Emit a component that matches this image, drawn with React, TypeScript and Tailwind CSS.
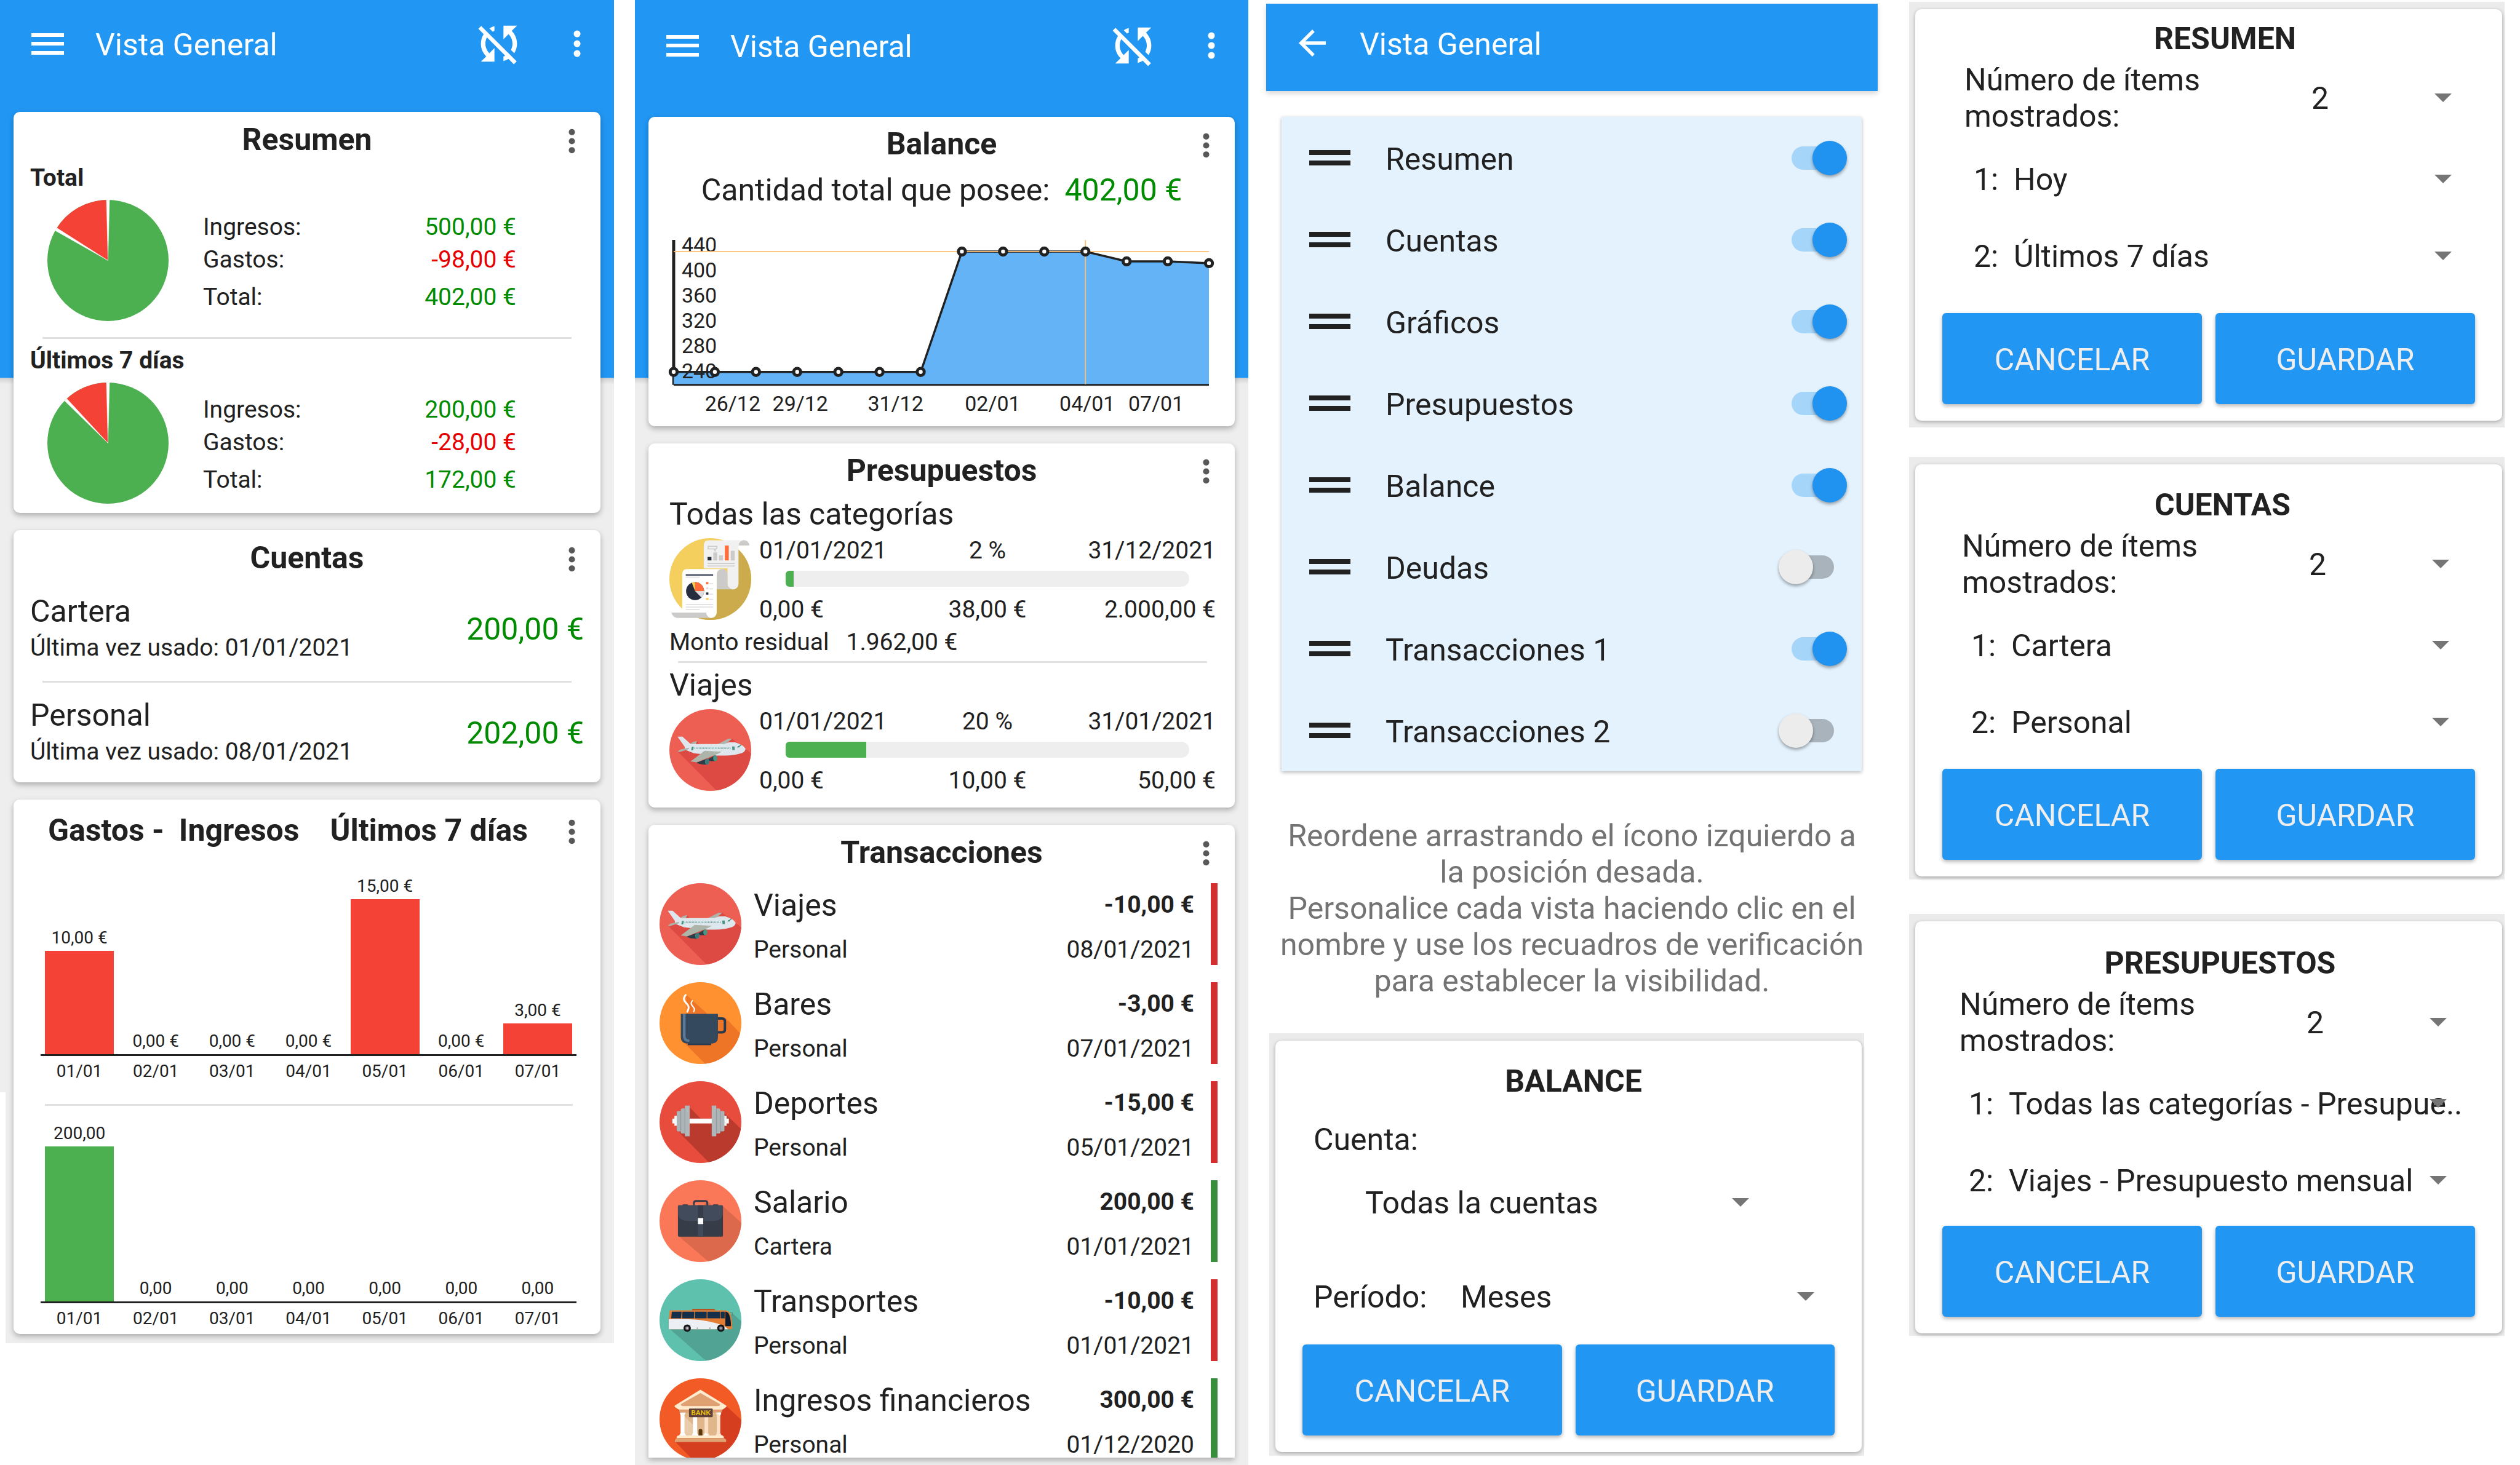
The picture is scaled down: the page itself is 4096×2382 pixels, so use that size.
import React from "react";

/* ---------- small shared icons ---------- */

function Dots({ className }: { className: string }) {
  return (
    <svg viewBox="0 0 12 44" className={className} fill="currentColor" aria-hidden="true">
      <circle cx="6" cy="6" r="5.5" />
      <circle cx="6" cy="22" r="5.5" />
      <circle cx="6" cy="38" r="5.5" />
    </svg>
  );
}

function MenuIcon() {
  return (
    <svg viewBox="0 0 53 35" className="h-[35px] w-[53px]" fill="currentColor" aria-hidden="true">
      <rect width="53" height="6" />
      <rect y="14" width="53" height="6" />
      <rect y="29" width="53" height="6" />
    </svg>
  );
}

function SyncDisabledIcon() {
  return (
    <svg viewBox="0 0 24 24" className="size-[88px]" fill="currentColor" aria-hidden="true">
      <path d="M10 6.35V4.26c-.8.21-1.55.54-2.23.96l1.46 1.46c.25-.12.5-.24.77-.33zm-7.14-.94l2.36 2.36C4.45 8.99 4 10.44 4 12c0 2.21.91 4.2 2.36 5.64L4 20h6v-6l-2.24 2.24C6.68 15.15 6 13.66 6 12c0-1 .25-1.94.68-2.77l8.08 8.08c-.25.13-.5.25-.77.34v2.09c.8-.21 1.55-.54 2.23-.96l2.36 2.36 1.27-1.27L4.14 4.14 2.86 5.41zM20 4h-6v6l2.24-2.24C17.32 8.85 18 10.34 18 12c0 1-.25 1.94-.68 2.77l1.46 1.46C19.55 15.01 20 13.56 20 12c0-2.21-.91-4.2-2.36-5.64L20 4z" />
    </svg>
  );
}

/* ---------- category icons ---------- */

function Disc({ id, color, shadow, shape, children }: { id: string; color: string; shadow: string; shape: string; children: React.ReactNode }) {
  return (
    <svg viewBox="0 0 100 100" className="size-[133px] shrink-0" aria-hidden="true">
      <defs>
        <clipPath id={id}>
          <circle cx="50" cy="50" r="50" />
        </clipPath>
      </defs>
      <circle cx="50" cy="50" r="50" fill={color} />
      <path d={shape} fill={shadow} clipPath={`url(#${id})`} />
      {children}
    </svg>
  );
}

function PlaneIcon({ id }: { id: string }) {
  return (
    <Disc id={id} color="#ee5f53" shadow="#dd4a43" shape="M10 51.5L58 100H100V54L76.5 36L66 46L37 43L34 39L28 48Z">
      <path d="M25 42.5L29 40L34 39L32 42.8ZM58.5 43L71.8 36.2L76.5 36L68.5 43Z" fill="#adb5ab" />
      <path d="M10 33.6H16L26 42.6H67L72.6 40.6H80.5Q91 44 93 48.3Q93 51.5 89 53.6Q80 56.8 68 56.8H56L30 54L18.6 49.4L19 46.5Z" fill="#dfe7ee" />
      <path d="M10 52L13.4 49.4L24 47.2L23.5 49L12.5 52.5Z" fill="#adb5ab" />
      <path d="M44 63L56 56.3L56.5 63.6L50 63.6Z" fill="#2a3f49" />
      <path d="M33 65.5L46 60.8V67.8Q37 68 33 65.5Z" fill="#2a3f49" />
      <path d="M26 64L43 51L64 52L59.6 54.5L33.4 65Z" fill="#adb5ab" />
      <ellipse cx="56" cy="60" rx="2.5" ry="3.7" fill="#4c9583" />
      <ellipse cx="46.2" cy="64.3" rx="2.3" ry="3.4" fill="#3a7c74" stroke="#5b7f93" strokeWidth="0.7" />
      <path d="M30.6 47.7H75" stroke="#4c9583" strokeWidth="1.3" strokeDasharray="0.9 0.9" />
      <path d="M27.4 46H29.8L29 50.4H26.6ZM76.6 45.6H79.6L80 50H77ZM82.8 47L84 45.2L86.6 44.6L86 46.6ZM85.6 44.6L86.8 43.2L88 43.6L87.4 45.2Z" fill="#4c9583" />
    </Disc>
  );
}

function ReportIcon({ id }: { id: string }) {
  return (
    <Disc id={id} color="#f5cf5d" shadow="#ccab4c" shape="M84 13.6L100 29V100H35V96L57 62L84 56Z">
      <path d="M84.5 9A6.6 6.6 0 0 1 97.7 9Z" fill="#cccbc9" />
      <path d="M42 44V9Q42 2.6 48 2.6H91Q84.5 3 84.5 9V56A6.6 6.6 0 0 1 71 56V37H42Z" fill="#f1f1f1" />
      <path d="M57.8 62.5V44A6.6 6.6 0 0 1 71 44V56Q71.5 62 78 62.5Z" fill="#cccbc9" />
      <path d="M47.3 10H58V13.2H47.3ZM54.5 13.5L56 15.5V13.5Z" fill="none" stroke="#cccbc9" strokeWidth="1.2" />
      <path d="M53.7 17.5H58.5V27.2H53.7ZM60.6 21H65.5V27.2H60.6ZM75 15.5H79.8V27.2H75ZM46.7 30.3H79.8V31.5H46.7ZM46.7 33.4H79.8V34.6H46.7Z" fill="#cccbc9" />
      <rect x="46.7" y="23" width="4.7" height="4.2" fill="#262d3d" />
      <rect x="67.8" y="9" width="4.8" height="18.2" fill="#ff6d3a" />
      <path d="M2.4 91H46L52 97.5H9Q4 96.5 2.4 91Z" fill="#cccbc9" />
      <path d="M15.7 44Q15.7 37.7 22 37.7H65Q57.8 37.7 57.8 45V91A6.5 6.5 0 0 1 51.5 97.5A6.5 6.5 0 0 1 45 91H15.7Z" fill="#fff" />
      <rect x="20" y="44.1" width="33.5" height="1.8" fill="#434c5e" />
      <path d="M20 47.2H37V48.4H20ZM20 80.7H53.5V81.9H20ZM20 83.6H53.5V84.8H20ZM20 86.6H37V87.8H20ZM49 55H53.5V56.2H49ZM49 61.4H53.5V62.6H49ZM49 67.8H53.5V69H49ZM49 74.2H53.5V75.4H49Z" fill="#dedede" />
      <circle cx="31.4" cy="64.7" r="11" fill="#262d3d" />
      <path d="M31.4 64.7V53.7A11 11 0 0 1 42.4 64.7Z" fill="#ff6d3a" />
      <path d="M31.4 64.7H42.4A11 11 0 0 1 39.2 72.5Z" fill="#dedede" />
      <path d="M31.4 64.7L27.4 54.4A11 11 0 0 1 31.4 53.7Z" fill="#fdd04f" />
      <rect x="44.8" y="53.7" width="2.9" height="2.6" fill="#ff6d3a" />
      <rect x="44.8" y="60" width="2.9" height="2.6" fill="#dedede" />
      <rect x="44.8" y="66.4" width="2.9" height="2.6" fill="#262d3d" />
      <rect x="44.8" y="73" width="2.9" height="2.6" fill="#fdd04f" />
    </Disc>
  );
}

function CupIcon({ id }: { id: string }) {
  return (
    <Disc id={id} color="#ff9131" shadow="#ee7526" shape="M32.4 15L58.5 38.7L81 44L100 64V100H56L28 72L33 36Z">
      <path d="M32 15.6C28 20 30 23 33 26C36 29 36.5 31 34 36" fill="none" stroke="#fff" strokeWidth="2.2" strokeLinecap="round" />
      <path d="M40 22.6C37.5 26 39 27.5 41 30C43.2 32.5 43 33.5 41.8 36" fill="none" stroke="#fff" strokeWidth="1.6" strokeLinecap="round" />
      <path d="M71 44.3H76.5Q79.9 44.3 79.9 48V57.5Q79.9 61.2 76.5 61.2H71" fill="none" stroke="#273a4d" strokeWidth="3" />
      <rect x="34.5" y="74" width="28.5" height="3" fill="#273a4d" />
      <path d="M26 38.7H71.4V67Q71.4 75 63.5 75H34.5Q26 75 26 67Z" fill="#34495e" />
      <path d="M28.6 39H31.8V66Q32 70 36 70.2Q37.5 71.5 36 73Q29 73 28.6 66Z" fill="#5b7a99" />
    </Disc>
  );
}

function DumbbellIcon({ id }: { id: string }) {
  return (
    <Disc id={id} color="#e74c3c" shadow="#ba3a2e" shape="M36.8 32L50 45.5L64 46L79.5 39.5L100 58.5V100H61L24 62.5L36 50Z">
      <rect x="15.7" y="45.7" width="69" height="5.9" fill="#fff" />
      <path d="M18.2 42.3H22V54.5H18.2ZM78.5 42.3H82V54.5H78.5Z" fill="#f3f5f7" />
      <rect x="21" y="36.4" width="6" height="24.8" rx="1.5" fill="#adb4b8" />
      <rect x="73.5" y="36.4" width="5.8" height="24.8" rx="1.5" fill="#adb4b8" />
      <rect x="26" y="33.2" width="6" height="30.8" rx="1.5" fill="#adb4b8" />
      <rect x="68.5" y="33.2" width="5.7" height="30.8" rx="1.5" fill="#adb4b8" />
      <rect x="31" y="29.8" width="5.8" height="37.5" fill="#b0b7ba" />
      <rect x="63.8" y="29.8" width="5.5" height="37.5" fill="#b0b7ba" />
      <path d="M26 37V60.5M31 34V63M69.4 34V63M74.2 37V60.5" stroke="#8d9498" strokeWidth="0.8" />
    </Disc>
  );
}

function BriefcaseIcon({ id }: { id: string }) {
  return (
    <Disc id={id} color="#fa7858" shadow="#dc694c" shape="M58.5 25.5L64.5 31L77.5 31.8L100 52V100H60.5L23.5 68.5L44 40Z">
      <path d="M42 31V28Q42 25.4 44.6 25.4H56Q58.4 25.4 58.4 28V31" fill="none" stroke="#363c48" strokeWidth="2.2" />
      <rect x="28.2" y="29.5" width="6.6" height="2" rx="0.8" fill="#363c48" />
      <rect x="65.2" y="29.5" width="6.6" height="2" rx="0.8" fill="#363c48" />
      <rect x="22.5" y="30.6" width="55" height="38.4" rx="1.5" fill="#363c48" />
      <path d="M24 30.6H76Q77.5 30.6 77.5 32V39Q77.5 49.8 66 49.8H34Q22.5 49.8 22.5 39V32Q22.5 30.6 24 30.6Z" fill="#414b5b" />
      <rect x="46.9" y="30.6" width="6.5" height="17" fill="#363c48" />
      <rect x="46.9" y="52" width="6.5" height="17" fill="#414b5b" />
      <rect x="46.9" y="46.2" width="6.5" height="7.4" fill="#fff" />
    </Disc>
  );
}

function BusIcon({ id }: { id: string }) {
  return (
    <Disc id={id} color="#5ec1ae" shadow="#51a493" shape="M12.4 60.5L57 100H100V51.5L89 41.5L80 50Z">
      <path d="M39.5 38.2Q39.5 36 41 36H66.5Q68 36 68 38.2Z" fill="#b25423" />
      <path d="M12.5 37.9H80Q85 38.2 87 43.5Q88.8 49 88.8 57L88.5 61H12Q11.2 61 11.2 59V49Z" fill="#e37d34" />
      <path d="M11.3 48.6Q50 47.5 70 54Q80 57 84 61H12Q11.2 61 11.2 59Z" fill="#eceff3" />
      <path d="M15 39.6H27L26.3 47.8H14.3ZM28 39.6H42.3L42 47.8H27.5ZM43.2 39.6H57.6V47.8H43ZM58.5 39.6H73.7V47.8H58.5ZM74.6 39.6H79.6V47.8H74.6Z" fill="#12304c" />
      <path d="M80.4 39.6Q84 39.6 85.4 44Q87.3 49 87.3 57.4H80.4Z" fill="#0d1e30" />
      <path d="M86 41H89V44.5" fill="none" stroke="#6b7a60" strokeWidth="0.7" />
      <path d="M45.5 59.2H47V60.2H45.5ZM60.8 59.2H62.3V60.2H60.8Z" fill="#555" />
      <circle cx="33.8" cy="59.8" r="4.5" fill="#141414" />
      <circle cx="33.8" cy="59.8" r="2.3" fill="#7d7482" />
      <circle cx="33.8" cy="59.8" r="1" fill="#ddd" />
      <circle cx="75" cy="59.8" r="4.5" fill="#141414" />
      <circle cx="75" cy="59.8" r="2.3" fill="#6a6c82" />
      <circle cx="75" cy="59.8" r="1" fill="#bbb" />
    </Disc>
  );
}

function BankIcon({ id }: { id: string }) {
  return (
    <Disc id={id} color="#f25b26" shadow="#d53f20" shape="M81.7 34L100 51V100H41L19 77.5L40 60L22 38Z">
      <rect x="27" y="41" width="47" height="30" fill="#e0b68b" />
      <path d="M30 46L41 57V71H30Z" fill="#e8cba8" />
      <path d="M24 38.7H76.5V40.5L75 42H25.5L24 40.5Z" fill="#dfa072" />
      <path d="M24.5 42H32L30.5 45V67L32.5 70H24L25.7 67V45ZM40.8 42H46V67L47.5 70H39.5L40.8 67Z" fill="#fff" />
      <path d="M55 42H59.5V67L61 70H53.5L55 67ZM68.5 42H75.5L74.2 45V67L76 70H68.5L70 67V45Z" fill="#fce0c8" />
      <path d="M53.5 70L56 66.5L60 70ZM70 42H75.5L74.2 46Z" fill="#fff" />
      <path d="M47.7 70V64Q47.7 61.8 50 61.8Q52.4 61.8 52.4 64V70Z" fill="#5c3a10" />
      <path d="M18.5 33.5L50 14L81.7 33.5V35L77 38.3H23.5L18.5 35Z" fill="#ffeccf" />
      <path d="M26 31.5L50 18L74 31.5Q74 34 71 34H29Q26 34 26 31.5Z" fill="#dfa072" />
      <path d="M21 71.5L22.5 70H77L78.6 71.5V73.2H21Z" fill="#ffeccf" />
      <path d="M18.8 75L21 73.2H79L81.4 75V78H18.8Z" fill="#dfa072" />
      <rect x="36" y="37" width="29" height="10.5" rx="1" fill="#5d4037" />
      <text x="50.5" y="45.2" textAnchor="middle" fontFamily="Lato, sans-serif" fontWeight="700" fontSize="8.5" fill="#f3c40e">
        BANK
      </text>
    </Disc>
  );
}

/* ---------- shared building blocks ---------- */

function AppBar({ className }: { className: string }) {
  return (
    <header className={`flex items-center pl-[51px] pr-[54px] text-white ${className}`}>
      <button type="button" aria-label="Menú">
        <MenuIcon />
      </button>
      <h1 className="ml-[51px] pt-1 text-[50px]/[58px]">Vista General</h1>
      <button type="button" aria-label="Sincronización desactivada" className="ml-auto">
        <SyncDisabledIcon />
      </button>
      <button type="button" aria-label="Más opciones" className="ml-[77px]">
        <Dots className="h-[44px] w-[12px]" />
      </button>
    </header>
  );
}

function Card({ className, children }: { className: string; children: React.ReactNode }) {
  return <section className={`mx-[22px] rounded-[10px] bg-white shadow-[0_4px_10px_rgba(0,0,0,0.28)] ${className}`}>{children}</section>;
}

function CardMenu({ label }: { label: string }) {
  return (
    <button type="button" aria-label={`Opciones de ${label}`} className="mr-[41px] justify-self-end pt-1 text-[#585858]">
      <Dots className="h-[41px] w-[11px]" />
    </button>
  );
}

function CardHeader({ title }: { title: string }) {
  return (
    <div className="grid grid-cols-[1fr_auto_1fr] items-center">
      <h2 className="col-start-2 text-[50px]/[58px] font-bold">{title}</h2>
      <CardMenu label={title} />
    </div>
  );
}

function Rule({ className }: { className: string }) {
  return <hr className={`h-[3px] border-0 bg-[#e0e0e0] ${className}`} />;
}

/* ---------- first screen ---------- */

function Pie({ share }: { share: number }) {
  const a = share * 2 * Math.PI;
  const x = 98.5 - 98.5 * Math.sin(a);
  const y = 98.5 - 98.5 * Math.cos(a);
  const dx = 2.5 * Math.cos(a);
  const dy = 2.5 * Math.sin(a);
  return (
    <svg viewBox="0 0 197 197" className="size-[197px] shrink-0" aria-hidden="true">
      <circle cx="98.5" cy="98.5" r="98.5" fill="#4caf50" />
      <path d={`M98.5 98.5L${x} ${y}A98.5 98.5 0 0 1 98.5 0Z`} fill="#f44336" />
      <path d={`M98.5 98.5L${x - dx} ${y + dy}L${x + dx} ${y - dy}ZM98.5 98.5L96 -1H101Z`} fill="#fff" stroke="#fff" strokeWidth="0.5" />
    </svg>
  );
}

function Summary({ title, income, expense, total, share }: { title: string; income: string; expense: string; total: string; share: number }) {
  return (
    <div>
      <h3 className="text-[39px]/[46px] font-bold">{title}</h3>
      <div className="mt-[13px] flex pl-[28px] pr-[110px]">
        <Pie share={share} />
        <dl className="ml-[56px] grid flex-1 grid-cols-[1fr_auto] content-start gap-y-[7px] pt-[21px] text-right text-[39px]/[46px]">
          <dt className="text-left">Ingresos:</dt>
          <dd className="text-[#008b00]">{income}</dd>
          <dt className="text-left">Gastos:</dt>
          <dd className="text-[#e60000]">{expense}</dd>
          <dt className="pt-2 text-left">Total:</dt>
          <dd className="pt-2 text-[#008b00]">{total}</dd>
        </dl>
      </div>
    </div>
  );
}

function Account({ name, used, amount }: { name: string; used: string; amount: string }) {
  return (
    <div className="flex items-center justify-between">
      <div>
        <h3 className="text-[50px]/[58px]">{name}</h3>
        <p className="mt-[7px] text-[39px]/[46px]">Última vez usado: {used}</p>
      </div>
      <p className="pt-1 text-[50px]/[58px] text-[#008b00]">{amount}</p>
    </div>
  );
}

const days = ["01/01", "02/01", "03/01", "04/01", "05/01", "06/01", "07/01"];

function BarChart({ values, labels, max, bar }: { values: number[]; labels: string[]; max: number; bar: string }) {
  return (
    <div className="ml-[17px] mr-[12px] text-center text-[28px]/[34px]">
      <div className="grid h-[290px] grid-cols-7 items-end gap-x-3 px-[7px]">
        {values.map((v, i) => (
          <div key={i}>
            <span className="block whitespace-nowrap pb-1">{labels[i]}</span>
            <div className={bar} style={{ height: `${(v / max) * 252}px` }} />
          </div>
        ))}
      </div>
      <div className="grid grid-cols-7 gap-x-3 border-t-3 border-[#212121] px-[7px] pt-2">
        {days.map((d) => (
          <span key={d}>{d}</span>
        ))}
      </div>
    </div>
  );
}

function ScreenOne() {
  return (
    <div className="relative mr-[34px] self-start bg-[linear-gradient(to_bottom,#2196f3_0px,#2196f3_614px,#d2d2d2_615px,#eeeeee_625px)] pb-[15px]">
      <div className="absolute bottom-0 left-0 h-[408px] w-[9px] bg-white" />
      <AppBar className="h-[142px]" />
      <main className="flex flex-col gap-[28px] pt-[40px]">
        <Card className="pb-[15px] pt-[16px]">
          <CardHeader title="Resumen" />
          <div className="px-[27px] pt-[10px]">
            <Summary title="Total" income="500,00 €" expense="-98,00 €" total="402,00 €" share={98 / 598} />
            <Rule className="mx-[20px] mb-[12px] mt-[26px]" />
            <Summary title="Últimos 7 días" income="200,00 €" expense="-28,00 €" total="172,00 €" share={28 / 228} />
          </div>
        </Card>
        <Card className="pb-[27px] pt-[16px]">
          <CardHeader title="Cuentas" />
          <div className="px-[27px] pt-[29px]">
            <Account name="Cartera" used="01/01/2021" amount="200,00 €" />
            <Rule className="mx-[20px] mb-[24px] mt-[31px]" />
            <Account name="Personal" used="08/01/2021" amount="202,00 €" />
          </div>
        </Card>
        <Card className="pb-[8px] pt-[21px]">
          <div className="flex items-center pl-[56px] text-[50px]/[58px] font-bold">
            <h2>Gastos -</h2>
            <h2 className="ml-[24px]">Ingresos</h2>
            <h2 className="ml-[50px] mr-auto">Últimos 7 días</h2>
            <CardMenu label="gráficos" />
          </div>
          <div className="px-[27px] pt-[45px]">
            <BarChart
              values={[10, 0, 0, 0, 15, 0, 3]}
              labels={["10,00 €", "0,00 €", "0,00 €", "0,00 €", "15,00 €", "0,00 €", "3,00 €"]}
              max={15}
              bar="bg-[#f44336]"
            />
            <Rule className="mb-[28px] ml-[24px] mr-[18px] mt-[36px]" />
            <BarChart values={[200, 0, 0, 0, 0, 0, 0]} labels={["200,00", "0,00", "0,00", "0,00", "0,00", "0,00", "0,00"]} max={200} bar="bg-[#4caf50]" />
          </div>
        </Card>
      </main>
    </div>
  );
}

/* ---------- second screen ---------- */

const series = [225, 225, 225, 225, 225, 225, 225, 29, 29, 29, 29, 45, 45, 48].map((y, i) => [41 + 67 * i, y]);

function BalanceChart() {
  const line = series.map((p) => p.join(",")).join(" ");
  return (
    <svg viewBox="0 -20 954 320" className="w-full" role="img" aria-label="Evolución del balance" fontFamily="Roboto, sans-serif" fontSize="34" fill="#212121">
      <polygon points={`41,246 ${line} 912,246`} fill="#64b3f6" />
      <path d="M41 10V225" stroke="#212121" strokeWidth="5" />
      <path d="M40 220V246" stroke="#212121" strokeWidth="2.5" />
      <path d="M41 246H912" stroke="#212121" strokeWidth="3" />
      {[440, 400, 360, 320, 280, 240].map((v, i) => (
        <text key={v} x="54" y={30 + i * 41}>
          {v}
        </text>
      ))}
      {[
        ["26/12", 137],
        ["29/12", 247],
        ["31/12", 402],
        ["02/01", 560],
        ["04/01", 714],
        ["07/01", 826],
      ].map(([d, x]) => (
        <text key={d} x={x} y="288" textAnchor="middle">
          {d}
        </text>
      ))}
      <polyline points={line} fill="none" stroke="#212121" strokeWidth="3.5" />
      <path d="M41 29H912M711 10V245" stroke="#ffbf75" strokeWidth="1.8" fill="none" />
      {series.map(([x, y]) => (
        <circle key={x} cx={x} cy={y} r="5.7" fill="#fff" stroke="#212121" strokeWidth="5" />
      ))}
    </svg>
  );
}

function Budget({ name, icon, from, to, percent, start, spent, limit }: { name: string; icon: React.ReactNode; from: string; to: string; percent: number; start: string; spent: string; limit: string }) {
  return (
    <div>
      <h3 className="text-[50px]/[58px]">{name}</h3>
      <div className="mt-[7px] flex gap-[13px]">
        <div className="pt-[3px]">{icon}</div>
        <div className="flex-1 text-[39px]/[46px]">
          <div className="grid grid-cols-3">
            <span>{from}</span>
            <span className="text-center">{percent} %</span>
            <span className="text-right">{to}</span>
          </div>
          <div className="ml-[43px] mr-[43px] mt-[10px] h-[26px] overflow-hidden rounded-l-[6px] rounded-r-[13px] bg-[#eeeeee]">
            <div className="h-full bg-[#4caf50]" style={{ width: `${percent}%` }} />
          </div>
          <div className="mt-[14px] grid grid-cols-3">
            <span>{start}</span>
            <span className="text-center">{spent}</span>
            <span className="text-right">{limit}</span>
          </div>
        </div>
      </div>
    </div>
  );
}

const transactions = [
  { icon: <PlaneIcon id="plane-b" />, name: "Viajes", account: "Personal", amount: "-10,00 €", date: "08/01/2021", income: false },
  { icon: <CupIcon id="cup" />, name: "Bares", account: "Personal", amount: "-3,00 €", date: "07/01/2021", income: false },
  { icon: <DumbbellIcon id="dumbbell" />, name: "Deportes", account: "Personal", amount: "-15,00 €", date: "05/01/2021", income: false },
  { icon: <BriefcaseIcon id="briefcase" />, name: "Salario", account: "Cartera", amount: "200,00 €", date: "01/01/2021", income: true },
  { icon: <BusIcon id="bus" />, name: "Transportes", account: "Personal", amount: "-10,00 €", date: "01/01/2021", income: false },
  { icon: <BankIcon id="bank" />, name: "Ingresos financieros", account: "Personal", amount: "300,00 €", date: "01/12/2020", income: true },
];

function ScreenTwo() {
  return (
    <div className="mr-[29px] bg-[linear-gradient(to_bottom,#2196f3_0px,#2196f3_614px,#d2d2d2_615px,#eeeeee_625px)] pb-[12px]">
      <AppBar className="h-[148px]" />
      <main className="flex flex-col gap-[28px] pt-[42px]">
        <Card className="pb-[13px] pt-[15px]">
          <CardHeader title="Balance" />
          <p className="mb-[22px] mt-[17px] flex justify-center gap-[24px] text-[50px]/[58px]">
            <span>Cantidad total que posee:</span>
            <span className="text-[#008b00]">402,00 €</span>
          </p>
          <BalanceChart />
        </Card>
        <Card className="pb-[21px] pt-[15px]">
          <CardHeader title="Presupuestos" />
          <div className="pl-[34px] pr-[31px] pt-[13px]">
            <Budget name="Todas las categorías" icon={<ReportIcon id="report" />} from="01/01/2021" to="31/12/2021" percent={2} start="0,00 €" spent="38,00 €" limit="2.000,00 €" />
            <p className="mt-[7px] flex gap-[28px] text-[39px]/[46px]">
              <span>Monto residual</span>
              <span>1.962,00 €</span>
            </p>
            <Rule className="mx-[14px] mb-[7px] mt-[8px]" />
            <Budget name="Viajes" icon={<PlaneIcon id="plane-a" />} from="01/01/2021" to="31/01/2021" percent={20} start="0,00 €" spent="10,00 €" limit="50,00 €" />
          </div>
        </Card>
        <Card className="h-[1029px] overflow-hidden rounded-b-none pt-[16px]">
          <CardHeader title="Transacciones" />
          <ul className="flex flex-col gap-[28px] pl-[18px] pr-[28px] pt-[21px]">
            {transactions.map((t) => (
              <li key={t.name} className="flex h-[133px]">
                {t.icon}
                <div className="ml-[20px] mt-[7px]">
                  <h3 className="text-[50px]/[58px]">{t.name}</h3>
                  <p className="mt-[22px] text-[39px]/[42px]">{t.account}</p>
                </div>
                <div className="ml-auto mt-[14px] text-right text-[39px]/[42px]">
                  <p className="font-bold">{t.amount}</p>
                  <p className="mt-[31px]">{t.date}</p>
                </div>
                <div className={t.income ? "ml-[27px] w-[11px] bg-[#388e3c]" : "ml-[27px] w-[11px] bg-[#d32f2f]"} />
              </li>
            ))}
          </ul>
        </Card>
      </main>
    </div>
  );
}

/* ---------- third screen ---------- */

const views: [string, boolean][] = [
  ["Resumen", true],
  ["Cuentas", true],
  ["Gráficos", true],
  ["Presupuestos", true],
  ["Balance", true],
  ["Deudas", false],
  ["Transacciones 1", true],
  ["Transacciones 2", false],
];

function Panel({ className, children }: { className: string; children: React.ReactNode }) {
  return (
    <form className={`bg-[#ebebeb] pl-[10px] pr-[4px] pt-[12px] ${className}`} onSubmit={(e) => e.preventDefault()}>
      <div className="rounded-[10px] bg-white pb-[27px] shadow-[0_2px_6px_rgba(0,0,0,0.3)]">{children}</div>
    </form>
  );
}

function PanelActions({ className }: { className: string }) {
  return (
    <div className={`grid grid-cols-2 gap-[22px] px-[44px] text-[50px]/[58px] text-[#eeeeee] ${className}`}>
      <button type="button" className="h-[148px] rounded-[6px] bg-[#2196f3] pt-1 shadow-[0_3px_6px_rgba(0,0,0,0.3)]">
        CANCELAR
      </button>
      <button type="button" className="h-[148px] rounded-[6px] bg-[#2196f3] pt-1 shadow-[0_3px_6px_rgba(0,0,0,0.3)]">
        GUARDAR
      </button>
    </div>
  );
}

function Picker({ id, value, className }: { id: string; value: string; className: string }) {
  return (
    <div className={`relative h-[58px] ${className}`}>
      <select id={id} className="h-[58px] w-[calc(100%+40px)] appearance-none bg-transparent p-0 text-[50px]/[58px]">
        <option>{value}</option>
      </select>
      <svg viewBox="0 0 28 14" className="pointer-events-none absolute right-0 top-[21px] h-[14px] w-[28px]" fill="#757575" aria-hidden="true">
        <path d="M0 0H28L14 14Z" />
      </svg>
    </div>
  );
}

function ScreenThree() {
  return (
    <div className="mr-[48px] pt-[6px]">
      <header className="flex h-[142px] items-center bg-[#2196f3] pb-[14px] pl-[42px] text-white shadow-[0_4px_8px_rgba(0,0,0,0.16)]">
        <button type="button" aria-label="Volver">
          <svg viewBox="0 0 24 24" className="size-[66px]" fill="currentColor" aria-hidden="true">
            <path d="M20 11H7.83l5.59-5.59L12 4l-8 8 8 8 1.41-1.41L7.83 13H20v-2z" />
          </svg>
        </button>
        <h1 className="ml-[44px] pt-1 text-[50px]/[58px]">Vista General</h1>
      </header>
      <ul className="ml-[25px] mr-[26px] mt-[42px] bg-[#e3f2fd] shadow-[0_2px_6px_rgba(0,0,0,0.28)]">
        {views.map(([name, on]) => (
          <li key={name}>
            <label className="flex h-[133px] items-center px-[45px]">
              <span className="flex w-[67px] flex-col gap-[9px]" aria-hidden="true">
                <span className="h-[8px] bg-[#212121]" />
                <span className="h-[8px] bg-[#212121]" />
              </span>
              <span className="ml-[57px] pt-1 text-[50px]/[58px]">{name}</span>
              <input
                type="checkbox"
                role="switch"
                defaultChecked={on}
                className="relative ml-auto h-[38px] w-[69px] appearance-none rounded-full bg-[#a8b3bb] before:absolute before:-left-[21px] before:-top-[9px] before:size-[56px] before:rounded-full before:bg-[#ececec] before:shadow-[0_3px_5px_rgba(0,0,0,0.35)] checked:bg-[#a6d5fa] checked:before:left-[34px] checked:before:bg-[#2092ef]"
              />
            </label>
          </li>
        ))}
      </ul>
      <p className="mt-[76px] whitespace-nowrap text-center text-[50px]/[59px] text-[#737373]">
        Reordene arrastrando el ícono izquierdo a<br />
        la posición desada.
        <br />
        Personalice cada vista haciendo clic en el
        <br />
        nombre y use los recuadros de verificación
        <br />
        para establecer la visibilidad.
      </p>
      <Panel className="ml-[5px] mr-[22px] mt-[55px] pb-[6px]">
        <h2 className="pl-[16px] pt-[37px] text-center text-[50px]/[58px] font-bold">BALANCE</h2>
        <div className="pl-[62px] pr-[77px] text-[50px]/[58px]">
          <label htmlFor="cuenta" className="mt-[37px] block">
            Cuenta:
          </label>
          <Picker id="cuenta" value="Todas la cuentas" className="ml-[84px] mr-[106px] mt-[45px]" />
          <div className="mt-[95px] flex">
            <label htmlFor="periodo" className="w-[239px]">
              Período:
            </label>
            <Picker id="periodo" value="Meses" className="flex-1" />
          </div>
        </div>
        <PanelActions className="mt-[48px]" />
      </Panel>
    </div>
  );
}

/* ---------- fourth column ---------- */

function ItemsPanel({ id, title, first, second, className, bodyClass, actionsClass }: { id: string; title: string; first: string; second: string; className: string; bodyClass: string; actionsClass: string }) {
  return (
    <Panel className={className}>
      <div className={`text-[50px]/[59px] ${bodyClass}`}>
        <h2 className="text-center leading-[58px] font-bold">{title}</h2>
        <div className="mt-[9px] flex items-center justify-between pr-[55px]">
          <label htmlFor={`${id}-n`} className="w-[400px]">
            Número de ítems mostrados:
          </label>
          <Picker id={`${id}-n`} value="2" className="w-[228px]" />
        </div>
        <div className="mt-[44px] flex pl-[15px] pr-[55px]">
          <label htmlFor={`${id}-1`} className="w-[65px]">
            1:
          </label>
          <Picker id={`${id}-1`} value={first} className="flex-1" />
        </div>
        <div className="mt-[66px] flex pl-[15px] pr-[55px]">
          <label htmlFor={`${id}-2`} className="w-[65px]">
            2:
          </label>
          <Picker id={`${id}-2`} value={second} className="flex-1" />
        </div>
      </div>
      <PanelActions className={actionsClass} />
    </Panel>
  );
}

function ScreenFour() {
  return (
    <div className="ml-[3px] mr-[25px] flex flex-col pt-[3px]">
      <ItemsPanel id="resumen" title="RESUMEN" first="Hoy" second="Últimos 7 días" className="pb-[11px]" bodyClass="pl-[80px] pr-[27px] pt-[19px]" actionsClass="mt-[62px]" />
      <ItemsPanel id="cuentas" title="CUENTAS" first="Cartera" second="Personal" className="mt-[48px] pb-[5px]" bodyClass="pl-[76px] pr-[31px] pt-[37px]" actionsClass="mt-[45px]" />
      <ItemsPanel
        id="presupuestos"
        title="PRESUPUESTOS"
        first="Todas las categorías - Presupue.."
        second="Viajes - Presupuesto mensual"
        className="mt-[56px] pb-[4px]"
        bodyClass="pl-[72px] pr-[35px] pt-[39px]"
        actionsClass="mt-[43px]"
      />
    </div>
  );
}

export default function App() {
  return (
    <div className="grid min-h-screen grid-cols-[1032fr_1026fr_1042fr_996fr] bg-white font-['Roboto',sans-serif] text-[#212121]">
      <ScreenOne />
      <ScreenTwo />
      <ScreenThree />
      <ScreenFour />
    </div>
  );
}
